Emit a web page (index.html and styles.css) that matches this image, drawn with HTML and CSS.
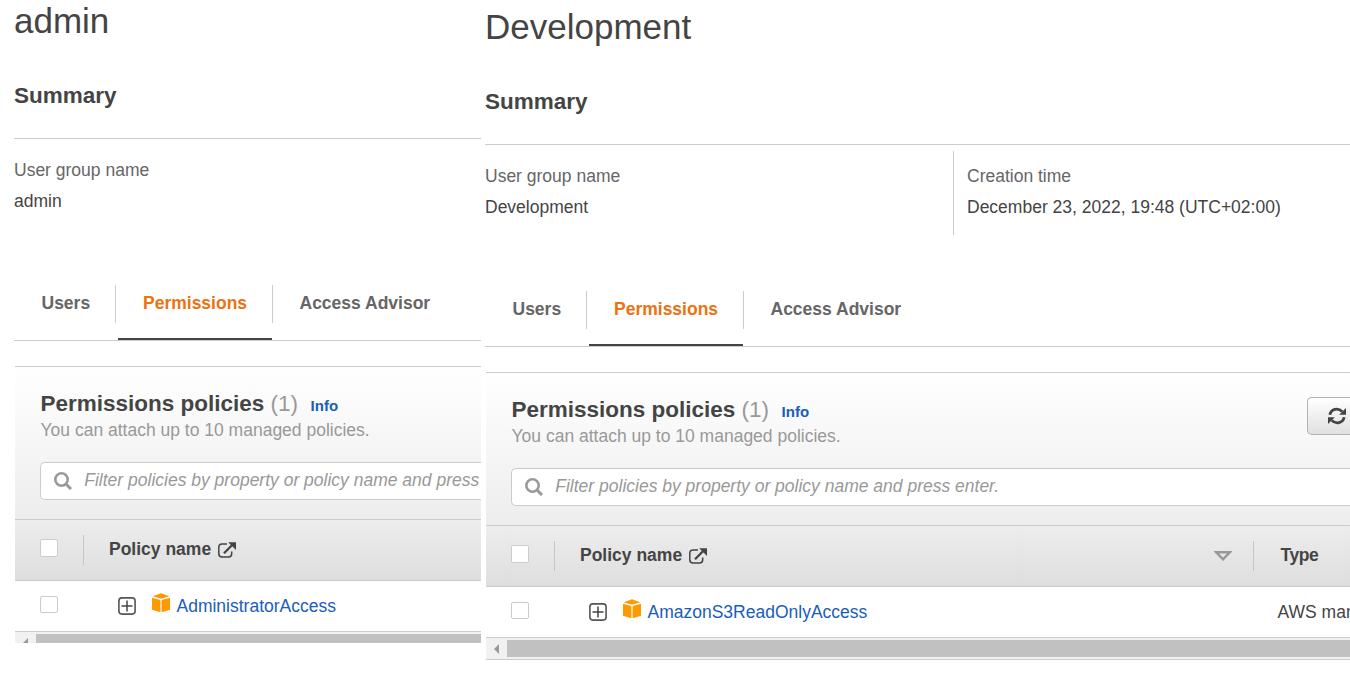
FILE: index.html
```html
<!DOCTYPE html>
<html lang="en">
<head>
<meta charset="utf-8">
<title>User groups</title>
<link rel="stylesheet" href="styles.css">
</head>
<body>
<svg class="sprite" aria-hidden="true">
  <symbol id="search" viewBox="0 0 18 18"><circle cx="7.5" cy="7.5" r="6.2" fill="none" stroke="#999" stroke-width="2.6"/><path d="M12 12l5 5" stroke="#999" stroke-width="3"/></symbol>
  <symbol id="external" viewBox="0 0 18 16"><path d="M9 2.1H4Q.8 2.1.8 5.2v6.6q0 3.2 3.2 3.2h6.6q3.1 0 3.1-3.2V9.5" fill="none" stroke="#444" stroke-width="1.5"/><path d="M6 11.2L14.2 3" stroke="#444" stroke-width="2.3"/><path d="M10.2.2H18V8z" fill="#444"/></symbol>
  <symbol id="expand" viewBox="0 0 18 18"><rect x=".9" y=".9" width="16.2" height="16.2" rx="3" fill="none" stroke="#555" stroke-width="1.6"/><path d="M3.5 9h11M9 3.5v11" stroke="#444" stroke-width="1.5"/></symbol>
  <symbol id="cube" viewBox="0 0 18 20"><path d="M.7 3.3L9 .2l8.3 3.1L9 5.8zM0 4.7l8.4 2.4v12.1L0 16.8zM18 4.7L9.6 7.1v12.1l8.4-2.4z" fill="#ff9900"/></symbol>
  <symbol id="refresh" viewBox="0 0 18 18"><path d="M1.8 7.7C3.2 1.8 10 .2 14.2 4.6M16.2 10.3C14.8 16.2 8 17.8 3.8 13.4" fill="none" stroke="#444" stroke-width="2.8"/><path d="M18 1v6.8h-6.8zM0 17v-6.8h6.8z" fill="#444"/></symbol>
  <symbol id="sort" viewBox="0 0 18 10"><path d="M2.2 1.3h13.6L9 8.3z" fill="none" stroke="#999" stroke-width="2.5"/></symbol>
</svg>
<main class="board">
  <section class="group group-admin">
    <h1>admin</h1>
    <h2 class="summary-title">Summary</h2>
    <div class="summary">
      <dl><dt>User group name</dt><dd>admin</dd></dl>
    </div>
    <nav class="tabs">
      <a class="tab users">Users</a>
      <a class="tab active">Permissions</a>
      <a class="tab">Access Advisor</a>
    </nav>
    <div class="policies">
      <header class="toolbar">
        <div class="heading">
          <h2>Permissions policies <span class="count">(1)</span><a class="info">Info</a></h2>
          <p>You can attach up to 10 managed policies.</p>
        </div>
        <div class="filter"><svg width="18" height="18"><use href="#search"/></svg><span>Filter policies by property or policy name and press</span></div>
      </header>
      <div class="row head">
        <i class="check"></i><i class="divider"></i>
        <span class="label">Policy name</span><svg class="ext" width="18" height="16"><use href="#external"/></svg>
      </div>
      <div class="row item">
        <i class="check"></i>
        <svg class="plus" width="18" height="18"><use href="#expand"/></svg>
        <svg class="cube" width="18" height="20"><use href="#cube"/></svg>
        <a class="policy">AdministratorAccess</a>
      </div>
      <div class="scrollbar"><div class="arrow-box"><i class="arrow"></i></div><div class="thumb"></div></div>
    </div>
  </section>

  <section class="group group-dev">
    <h1>Development</h1>
    <h2 class="summary-title">Summary</h2>
    <div class="summary">
      <dl><dt>User group name</dt><dd>Development</dd></dl>
      <dl class="created"><dt>Creation time</dt><dd>December 23, 2022, 19:48 (UTC+02:00)</dd></dl>
    </div>
    <nav class="tabs">
      <a class="tab users">Users</a>
      <a class="tab active">Permissions</a>
      <a class="tab">Access Advisor</a>
    </nav>
    <div class="policies">
      <header class="toolbar">
        <div class="heading-line">
          <div class="heading">
            <h2>Permissions policies <span class="count">(1)</span><a class="info">Info</a></h2>
            <p>You can attach up to 10 managed policies.</p>
          </div>
          <div class="refresh"><svg width="18" height="18"><use href="#refresh"/></svg></div>
        </div>
        <div class="filter"><svg width="18" height="18"><use href="#search"/></svg><span>Filter policies by property or policy name and press enter.</span></div>
      </header>
      <div class="row head">
        <i class="check"></i><i class="divider"></i>
        <span class="label">Policy name</span><svg class="ext" width="18" height="16"><use href="#external"/></svg>
        <div class="type-col"><svg class="sort" width="18" height="10"><use href="#sort"/></svg><i class="divider"></i><span class="type">Type</span></div>
      </div>
      <div class="row item">
        <i class="check"></i>
        <svg class="plus" width="18" height="18"><use href="#expand"/></svg>
        <svg class="cube" width="18" height="20"><use href="#cube"/></svg>
        <a class="policy">AmazonS3ReadOnlyAccess</a>
        <span class="managed">AWS managed</span>
      </div>
      <div class="scrollbar"><div class="arrow-box"><i class="arrow"></i></div><div class="thumb"></div></div>
    </div>
  </section>
</main>
</body>
</html>
```
FILE: styles.css
```css
* { box-sizing: border-box; margin: 0; padding: 0; }
body {
  height: 679px;
  overflow: hidden;
  background: #fff;
  color: #444;
  font: 17.5px/22px "Liberation Sans", Arial, sans-serif;
}
svg { display: block; flex: none; }
.sprite { position: absolute; width: 0; height: 0; }
.board { display: flex; align-items: flex-start; gap: 4px; padding-left: 14px; height: 679px; }
.group { overflow: hidden; white-space: nowrap; }
.group-admin { flex: none; width: 467px; height: 643px; }
.group-dev { flex: 1; min-width: 0; height: 660px; margin-top: 6px; }

h1 { font-size: 35px; font-weight: 400; line-height: 42px; height: 42px; }
h2 { font-size: 22.5px; line-height: 28px; }
.summary-title { margin-top: 40px; height: 56px; }

.summary { display: flex; height: 146px; border-top: 1px solid #ccc; padding-top: 6px; }
.summary dl { width: 468px; height: 84px; padding-top: 14px; flex: none; }
.summary dt { color: #666; margin-bottom: 9px; }
.summary .created { width: auto; border-left: 1px solid #ccc; padding-left: 13px; }

.tabs { display: flex; height: 57px; border-bottom: 1px solid #ccc; color: #666; font-weight: 700; }
.tab { height: 38px; margin-top: 1px; padding: 7px 26px 0; }
.tab:last-child { padding-left: 26.5px; }
.users { width: 102px; padding-left: 27.5px; border-right: 1px solid #ccc; }
.active {
  width: 157px;
  padding: 7px 0 0 27px;
  color: #ec7211;
  border-right: 1px solid #ccc;
  position: relative;
}
.active::after { content: ""; position: absolute; left: 2px; right: 0; top: 53px; height: 2px; background: #444; }

.policies { margin: 25px 0 0 1px; border-top: 1px solid #ccc; }
.toolbar { height: 152px; padding: 23px 0 0 25px; background: linear-gradient(#fff, #ededed); }
.heading { height: 72px; padding-left: .5px; }
.heading-line { display: flex; justify-content: space-between; }
.heading p { margin-top: -1px; color: #999; }
.count { color: #999; font-weight: 400; }
.info { margin-left: 12.5px; color: #1a5dba; font-size: 15px; }
.refresh {
  width: 43px;
  height: 38px;
  margin-top: 1px;
  padding: 9px 0 0 20px;
  border: 1px solid #b3b3b3;
  border-right: 0;
  border-radius: 5px 0 0 5px;
  background: linear-gradient(#fff, #e0e0e0);
}
.filter {
  display: flex;
  height: 38px;
  padding: 9px 0 0 13px;
  border: 1px solid #ccc;
  border-right: 0;
  border-radius: 5px 0 0 5px;
  background: #fff;
  color: #999;
  font-style: italic;
  line-height: 18px;
}
.filter span { margin: -1px 0 0 12.3px; }

.row { display: flex; align-items: center; padding-left: 25px; }
.head { height: 62px; border: solid #ccc; border-width: 1px 0; background: linear-gradient(#ededed, #dedede); font-weight: 700; }
.item { height: 50px; }
.check { flex: none; width: 18px; height: 18px; border: 1px solid #ccc; border-radius: 2px; background: #fff; margin-top: -4px; }
.divider { flex: none; width: 1px; height: 30px; background: #c6c6c6; }
.head .divider { margin-left: 25px; }
.label { margin-left: 25px; margin-top: -2px; }
.ext { margin: 0 0 0 7px; }
.item .check { height: 17px; margin-top: -3px; }
.plus { margin-left: 60px; }
.cube { margin: -6px 0 0 16px; }
.policy { margin-left: 6.5px; color: #1a5dba; }
.type-col { display: flex; align-items: center; margin-left: auto; width: 136px; flex: none; }
.type-col .divider { margin-left: 21px; }
.type { margin: -2px 0 0 26.5px; letter-spacing: -.4px; }
.managed { flex: none; width: 72.5px; margin-left: auto; }

.scrollbar { display: flex; height: 23px; padding: 2px 0; border: solid #ccc; border-width: 1px 0; background: #f1f1f1; }
.arrow-box { width: 21px; padding: 4px 0 0 8px; }
.arrow { display: block; width: 0; height: 0; border: solid transparent; border-width: 5px 5px 5px 0; border-right-color: #999; }
.thumb { flex: 1; background: #c1c1c1; }
```
